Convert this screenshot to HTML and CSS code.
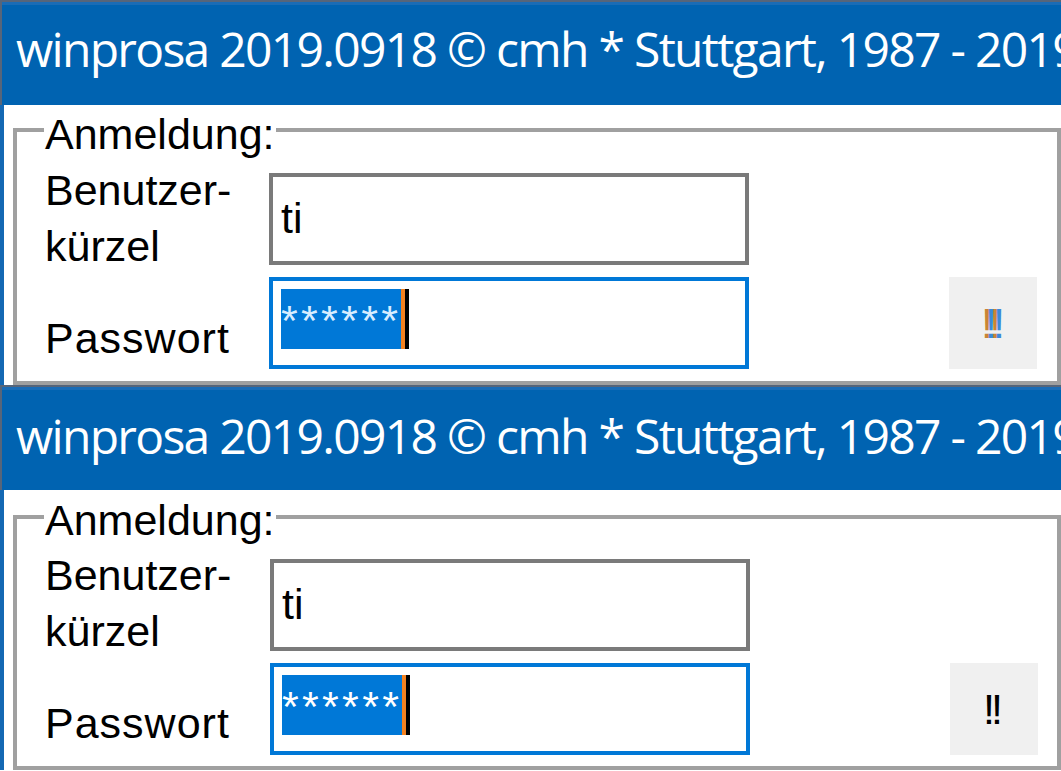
FILE: index.html
```html
<!DOCTYPE html>
<html lang="de">
<head>
<meta charset="utf-8">
<title>winprosa Anmeldung</title>
<link rel="stylesheet" href="styles.css">
</head>
<body>
<div class="win win-a">
  <div class="titlebar"><span class="title-text">winprosa 2019.0918 © cmh * Stuttgart, 1987 - 2019</span></div>
  <div class="client">
    <div class="group">
      <span class="legend">Anmeldung:</span>
      <div class="row">
        <div class="label label-user">Benutzer-<br>kürzel</div>
        <div class="field field-text">ti</div>
      </div>
      <div class="row">
        <div class="label label-pass">Passwort</div>
        <div class="field field-focus"><span class="sel">******</span><span class="caret"></span></div>
        <div class="btn"><span class="btn-text">!!</span></div>
      </div>
    </div>
  </div>
</div>
<div class="win win-b">
  <div class="titlebar"><span class="title-text">winprosa 2019.0918 © cmh * Stuttgart, 1987 - 2019</span></div>
  <div class="client">
    <div class="group">
      <span class="legend">Anmeldung:</span>
      <div class="row">
        <div class="label label-user">Benutzer-<br>kürzel</div>
        <div class="field field-text">ti</div>
      </div>
      <div class="row">
        <div class="label label-pass">Passwort</div>
        <div class="field field-focus"><span class="sel">******</span><span class="caret"></span></div>
        <div class="btn"><span class="btn-text">!!</span></div>
      </div>
    </div>
  </div>
</div>
</body>
</html>
```

FILE: styles.css
```css
* {
  box-sizing: border-box;
  margin: 0;
  padding: 0;
}

html,
body {
  width: 1061px;
  height: 771px;
  overflow: hidden;
  background: #ffffff;
}

body {
  font-family: "Liberation Sans", Arial, sans-serif;
  color: #000000;
}

.win {
  width: 1061px;
  overflow: hidden;
}

.titlebar {
  height: 105px;
  background: #0063b1;
  border-top: 2px solid #56657a;
  border-left: 2px solid #56657a;
  box-shadow: inset 0 3px 0 #1a6cb6;
  padding: 17px 0 0 14px;
  color: #ffffff;
  font-family: "Open Sans", "Noto Sans", sans-serif;
  font-size: 48px;
  line-height: 60px;
  letter-spacing: -1.7px;
  white-space: nowrap;
  overflow: hidden;
}

.client {
  border-left: 4px solid #1468b3;
  padding: 23px 0 0 9px;
  background: #ffffff;
}

.group {
  position: relative;
  border: 4px solid #a0a0a0;
  padding: 41px 0 12px 28px;
}

.legend {
  position: absolute;
  left: 27px;
  top: -26px;
  background: #ffffff;
  padding: 0 1px;
  font-size: 43px;
  line-height: 56px;
}

.row {
  display: flex;
  align-items: flex-start;
}

.row + .row {
  margin-top: 12px;
}

.label {
  flex: none;
  width: 224px;
  font-size: 43px;
  line-height: 56px;
}

.label-user {
  margin: -11px 0 -20px;
}

.label-pass {
  margin-top: 33px;
  letter-spacing: 1px;
}

.field {
  flex: none;
  width: 480px;
  height: 92px;
  border: 4px solid #7a7a7a;
  background: #ffffff;
  padding: 8px;
  font-size: 43px;
}

.field-text {
  padding-top: 11px;
  line-height: 60px;
}

.field-focus {
  border-color: #0078d7;
  display: flex;
  align-items: flex-start;
}

.sel {
  display: block;
  width: 120px;
  height: 60px;
  background: #0078d7;
  color: #d6ecff;
  line-height: 62px;
  letter-spacing: 3.3px;
  white-space: nowrap;
  overflow: hidden;
}

.caret {
  display: block;
  width: 8px;
  height: 60px;
  border-left: 4px solid #f58220;
  background: #000000;
}

.btn {
  flex: none;
  margin-left: 200px;
  width: 88px;
  height: 92px;
  background: #f0f0f0;
  display: flex;
  align-items: center;
  justify-content: center;
  font-size: 43px;
  line-height: 92px;
}

.btn-text {
  letter-spacing: -4px;
}

.win-a .btn-text {
  color: #3b8ad8;
  text-shadow: -4px 0 0 #c98536;
}

/* second (lower) window */
.win-b .titlebar {
  padding-top: 19px;
}

.win-b .client {
  padding-top: 25px;
}

.win-b .group {
  padding: 40px 0 11px 28px;
}

.win-b .legend {
  top: -27px;
}

.win-b .label {
  width: 225px;
}

.win-b .label-user {
  margin: -12px 0 -20px;
}

.win-b .label-pass {
  margin-top: 32px;
}

.win-b .sel {
  color: #ffffff;
}

.win-b .btn-text {
  color: #000000;
  margin-right: 6px;
}
```
